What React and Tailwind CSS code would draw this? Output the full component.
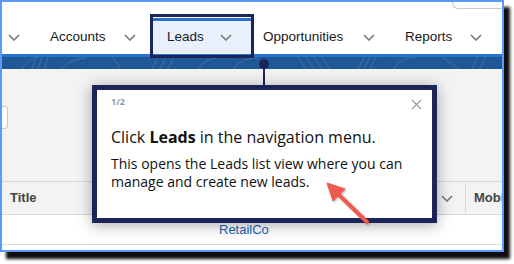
const Chevron = ({ className = '' }) => (
  <svg width="12" height="7" viewBox="0 0 12 7" className={className}>
    <polyline points="1,1 6,6 11,1" fill="none" stroke="#747474" strokeWidth="1.5" />
  </svg>
)

const NavItem = ({ label, w, pl, pr, active }) => (
  <div
    className={
      'flex items-center h-full shrink-0 border-t-[3px] pb-[1px] ' +
      (active ? 'bg-[#e8f0fb] border-[#2b6fd1]' : 'border-transparent')
    }
    style={{ width: w, paddingLeft: pl, paddingRight: pr }}
  >
    <span className="text-[13.5px] text-[#181818]">{label}</span>
    <Chevron className="ml-auto" />
  </div>
)

const Banner = () => (
  <div className="h-[15px] flex flex-col shrink-0">
    <div className="h-[3px] bg-[#2673d3]" />
    <div className="flex-1 bg-[#1f5896] overflow-hidden">
      <svg width="500" height="12" viewBox="0 0 500 12">
        <g fill="none" stroke="#3d72ac" strokeWidth="1">
          <path d="M20 12 C24 4 30 2 36 0" />
          <path d="M30 12 L34 0 M36 12 L40 0 M42 12 L46 0" />
          <path d="M60 12 C64 6 72 2 84 1" />
          <path d="M110 0 C116 6 118 10 116 12" />
          <path d="M150 12 L156 0 M158 12 L164 0 M166 12 L172 0" />
          <path d="M196 12 C200 4 210 1 222 0" />
          <path d="M232 12 C236 4 246 1 256 1" />
          <path d="M296 0 L304 12 M304 0 L312 12 M312 0 L320 12 M320 0 L328 12" />
          <path d="M356 12 L362 0 M362 12 L368 0 M368 12 L374 0" />
          <path d="M392 12 C396 4 404 1 414 0" />
          <path d="M440 0 C446 4 452 8 456 12" />
          <path d="M470 12 L476 0 M478 12 L484 0" />
        </g>
      </svg>
    </div>
  </div>
)

export default function App() {
  return (
    <div className="relative w-[514px] h-[264px] bg-white overflow-hidden" style={{ fontFamily: '"Liberation Sans", Arial, sans-serif' }}>
      <div className="w-[504px] h-[252px] border-2 border-[#5b9bf5] bg-white overflow-hidden flex flex-col shadow-[6px_7px_3px_rgba(0,0,0,0.95)]">
        {/* header */}
        <div className="h-[52px] flex flex-col shrink-0 bg-white">
          <div className="h-[16px] flex justify-end items-start">
            <div className="w-[50px] h-[7px] border border-t-0 border-r-0 border-[#c9c9c9] rounded-bl-[6px]" />
          </div>
          <div className="h-[36px] flex items-stretch">
            <div className="w-[34px] pl-[6px] pt-[3px] pb-[1px] flex items-center shrink-0">
              <Chevron />
            </div>
            <NavItem label="Accounts" w={117} pl={14} pr={17} />
            <NavItem label="Leads" w={98} pl={14} pr={19} active />
            <NavItem label="Opportunities" w={140} pl={12} pr={16} />
            <NavItem label="Reports" w={109} pl={14} pr={18} />
          </div>
        </div>
        <Banner />
        {/* page content */}
        <div className="flex-1 flex flex-col bg-[#f3f3f3]">
          <div className="h-[112px] pt-[37px]">
            <div className="w-[6px] h-[23px] bg-white border border-l-0 border-[#c9c9c9] rounded-r-[4px]" />
          </div>
          <div className="h-[34px] border-y border-[#d8d8d8] flex items-center shrink-0">
            <span className="ml-[8px] flex-1 text-[13px] font-bold text-[#444]">Title</span>
            <Chevron />
            <div className="ml-[12px] w-px self-stretch my-[1px] bg-[#d8d8d8]" />
            <span className="ml-[8px] w-[28px] shrink-0 overflow-hidden whitespace-nowrap text-[13px] font-bold text-[#444]">Mobile</span>
          </div>
          <div className="h-[30px] bg-white border-b border-[#d8d8d8] flex items-center shrink-0">
            <span className="ml-[217px] text-[13px] text-[#1b62b8]">RetailCo</span>
          </div>
          <div className="flex-1 bg-white" />
        </div>
      </div>

      {/* highlight around Leads tab */}
      <div className="absolute left-[150px] top-[14px] w-[104px] h-[44px] border-[3px] border-[#1b2559]" />

      {/* connector */}
      <div className="absolute left-[263px] top-[63px] w-[2px] h-[24px] bg-[#1b2559]" />
      <div className="absolute left-[259px] top-[59px] w-[10px] h-[10px] rounded-full bg-[#1b2559]" />

      {/* tour popup */}
      <div
        className="absolute left-[92px] top-[85px] w-[345px] h-[138px] bg-white border-[5px] border-[#1b2559] shadow-[0_2px_14px_rgba(0,0,0,0.35)] pl-[14px] pr-[10px] pt-[6px]"
        style={{ fontFamily: '"Open Sans", sans-serif' }}
      >
        <div className="flex items-start justify-between">
          <span className="text-[9px] font-bold text-[#8e9bb0] leading-[12px]">1/2</span>
          <svg width="11" height="11" viewBox="0 0 11 11" className="mt-[3px]">
            <path d="M1 1 L10 10 M10 1 L1 10" stroke="#9a9a9a" strokeWidth="1.2" />
          </svg>
        </div>
        <div className="mt-[17px] text-[16px] leading-[20px] text-[#111]">
          Click <span className="font-bold">Leads</span> in the navigation menu.
        </div>
        <div className="mt-[8px] pr-[4px] text-[14px] leading-[18px] text-[#111]">
          This opens the Leads list view where you can manage and create new leads.
        </div>
      </div>

      {/* red arrow */}
      <svg className="absolute left-0 top-0" width="514" height="264" viewBox="0 0 514 264">
        <defs>
          <filter id="sh" x="-20%" y="-20%" width="140%" height="140%">
            <feDropShadow dx="1" dy="1" stdDeviation="1" floodColor="#000" floodOpacity="0.3" />
          </filter>
        </defs>
        <g filter="url(#sh)" fill="#ee5a4e" stroke="#ee5a4e">
          <line x1="367" y1="222" x2="337" y2="193" strokeWidth="4" strokeLinecap="round" />
          <polygon points="327,183 345,189 333,201" strokeWidth="1" strokeLinejoin="round" />
        </g>
      </svg>
    </div>
  )
}
